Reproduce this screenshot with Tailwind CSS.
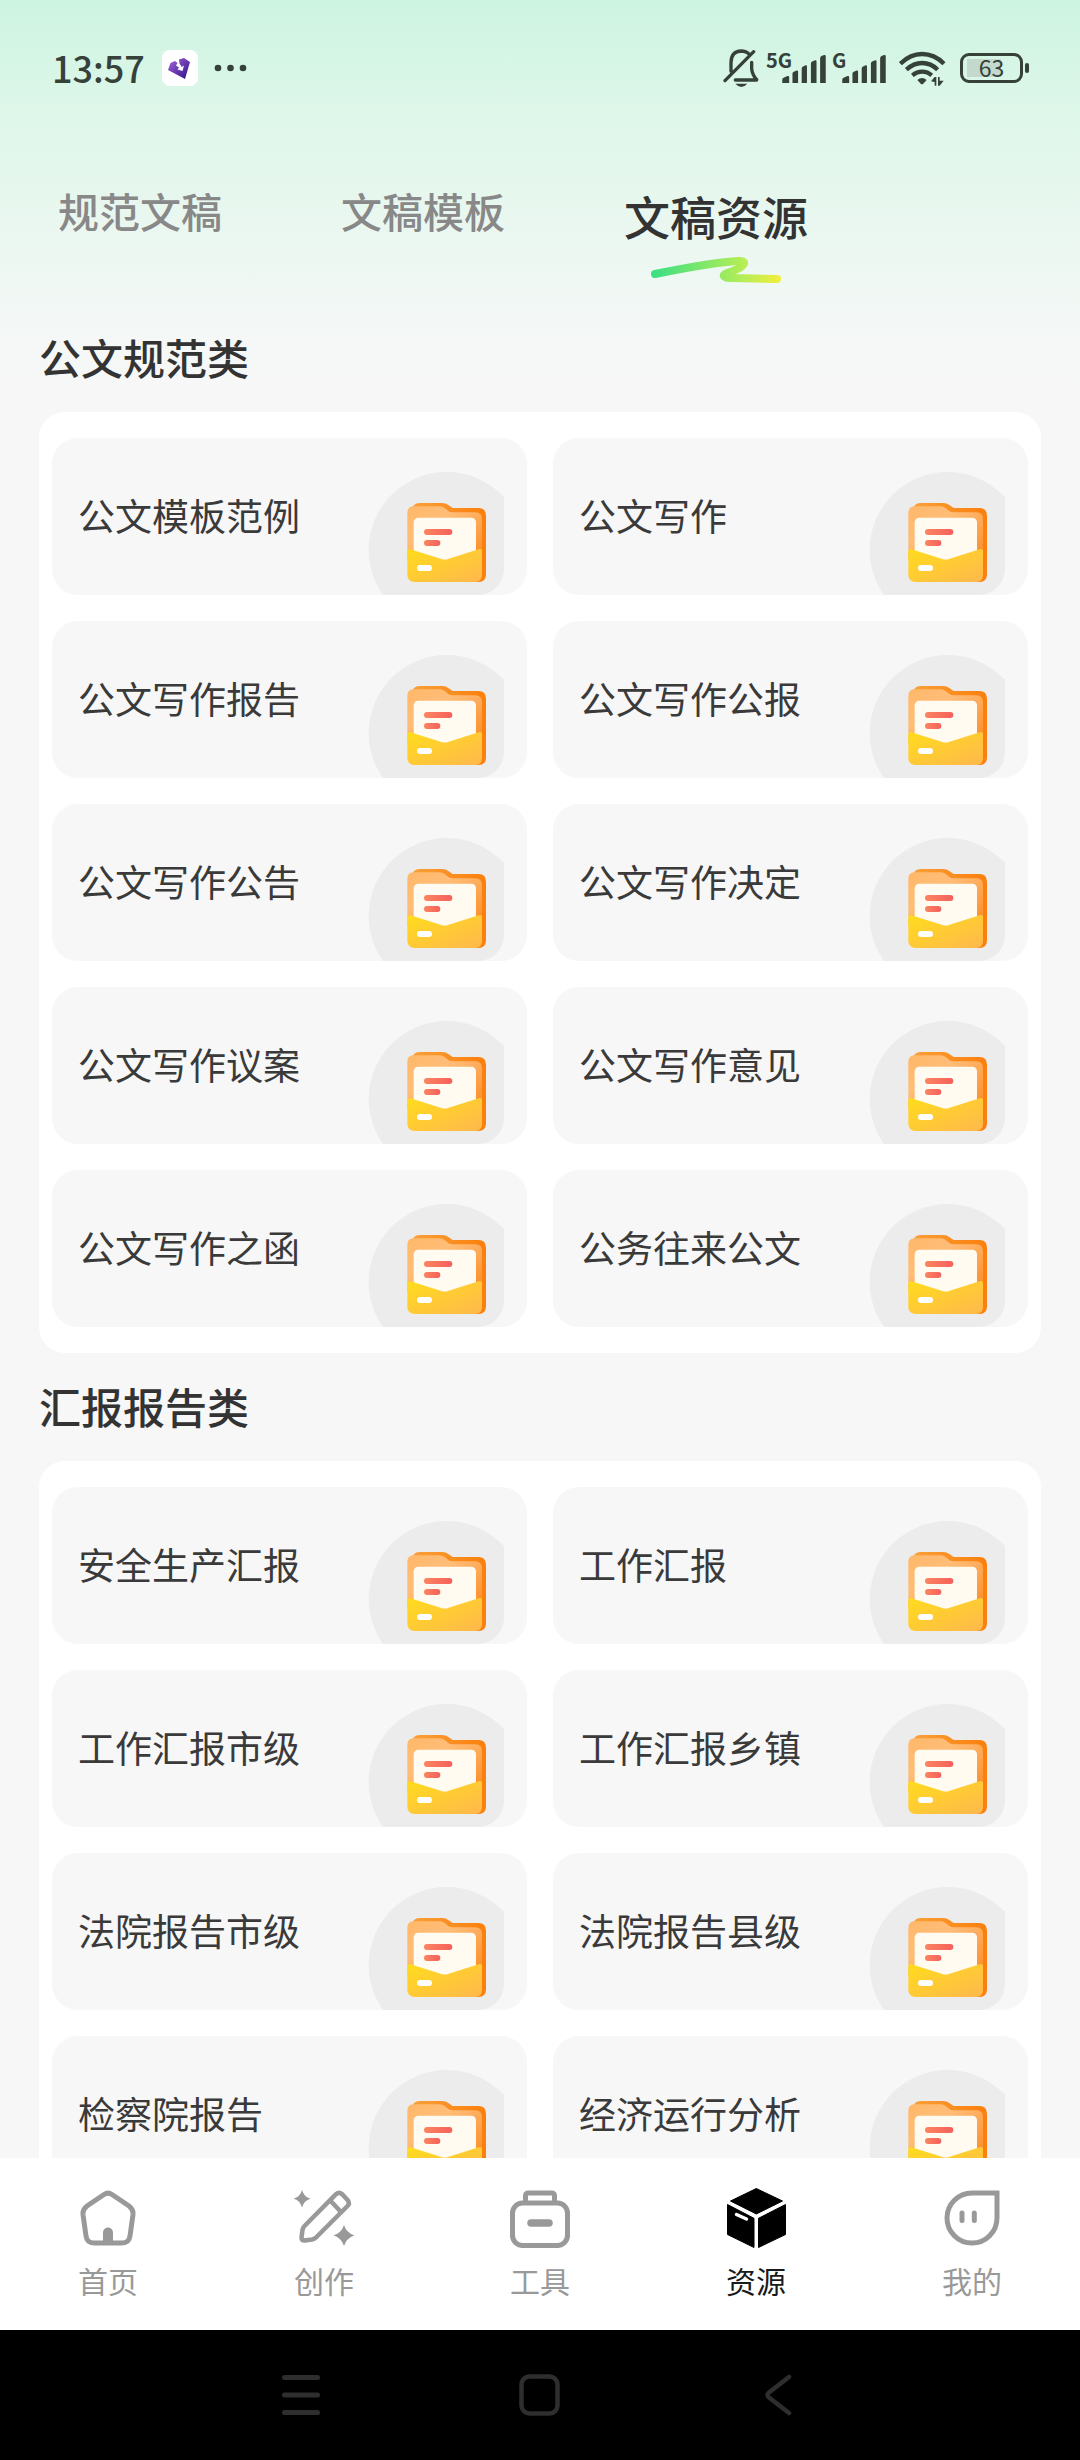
<!DOCTYPE html>
<html lang="zh-CN">
<head>
<meta charset="utf-8">
<meta name="viewport" content="width=device-width, initial-scale=1">
<title>文稿资源</title>
<script src="https://cdn.jsdelivr.net/npm/@tailwindcss/browser@4"></script>
</head>
<body class="bg-[#f7f7f7] font-['Noto_Sans_CJK_SC',sans-serif] text-[#333]">

<!-- Shared drawings -->
<svg class="absolute h-0 w-0" aria-hidden="true">
  <defs>
    <linearGradient id="back" x1="0" y1="0" x2="1" y2="0"><stop offset="0" stop-color="#f9a03a"/><stop offset="1" stop-color="#fb7f0c"/></linearGradient>
    <linearGradient id="front" x1="0" y1="0" x2="1" y2="1"><stop offset="0" stop-color="#ffb869"/><stop offset=".35" stop-color="#ffbd78"/><stop offset="1" stop-color="#fb8a22"/></linearGradient>
    <linearGradient id="pocket" x1="0" y1="0" x2="1" y2="1"><stop offset="0" stop-color="#ffdc1c"/><stop offset="1" stop-color="#ffb84e"/></linearGradient>
    <linearGradient id="line" x1="0" y1="0" x2="1" y2="0"><stop offset="0" stop-color="#fb8560"/><stop offset="1" stop-color="#f5605c"/></linearGradient>
  </defs>
  <symbol id="folder" viewBox="54 66 408 369">
    <circle cx="290" cy="300" r="234" fill="#ececec"/>
    <path fill="url(#back)" d="M208 159H276Q288 159 296 166L308 174H386Q408 175 408 197V374Q407 395 386 396H200L184 180Q190 159 208 159Z"/>
    <path fill="url(#front)" d="M190 169H268Q278 169 284 174L296 184Q300 187 308 187H376Q396 188 396 207V330H172V189Q172 170 190 169Z"/>
    <rect x="191" y="203" width="187" height="150" rx="14" fill="#fffbf1"/>
    <rect x="222" y="237" width="85" height="18" rx="9" fill="url(#line)"/>
    <rect x="222" y="270" width="49" height="18" rx="9" fill="url(#line)"/>
    <path fill="url(#pocket)" d="M172 303Q173 296 181 298L272 326Q284 331 296 326L386 298Q396 295 396 304V376Q395 396 376 396H194Q173 395 172 376Z"/>
    <rect x="201" y="345" width="45" height="18" rx="9" fill="#fff"/>
  </symbol>
  <symbol id="bars" viewBox="246 103 132 85">
    <path fill="#354139" d="M246 188V178Q246 174 250 172L262 167Q267 166 267 170V188ZM277 188V160Q277 156 281 154L290 150Q294 149 294 153V188ZM305 188V144Q305 140 309 138L317 134Q321 133 321 137V188ZM333 188V129Q333 125 337 123L346 119Q350 118 350 122V188ZM361 188V113Q361 108 365 106L373 103Q378 102 378 107V188Z"/>
  </symbol>
</svg>

<div class="flex h-screen flex-col bg-[linear-gradient(180deg,#cdf4e1_0px,#dff7ea_120px,#e8f7ef_210px,#f4f8f6_330px,#f7f7f7_400px)]">

  <!-- Status bar -->
  <div class="flex h-[136px] shrink-0 items-center pl-[52px] pr-[51px] text-[#354139]">
    <div class="pb-[2px] text-[36px] font-medium leading-[40px]">13:57</div>
    <svg class="ml-[17px] h-[36px] w-[36px]" viewBox="0 0 36 36"><defs><linearGradient id="app" x1="0" y1="0" x2="1" y2="1"><stop offset="0" stop-color="#a866dc"/><stop offset="1" stop-color="#2c0f86"/></linearGradient></defs><rect width="36" height="36" rx="8" fill="#fff"/><path fill="url(#app)" d="M6 20L8.500 13L13 11L15.500 13L14 15.500L17 17.500L15.500 19.500L20.500 21L22 15.500L19.800 17L17.500 13.500L17 9.500L22 8L28 12L23 29Z"/></svg>
    <svg class="ml-[16px] h-[8px] w-[34px]" viewBox="0 0 34 8" fill="#354139"><circle cx="4" cy="4" r="3.300"/><circle cx="16.500" cy="4" r="3.300"/><circle cx="29" cy="4" r="3.300"/></svg>
    <div class="ml-auto flex items-center">
      <svg class="h-[39px] w-[36px]" viewBox="70 88 108 117" fill="none" stroke="#354139" stroke-width="10" stroke-linecap="round"><path d="M94 155V128Q95 95 124 94Q140 94 149 104M76 183L162 96M156 128V148Q158 166 171 180M171 181H107" stroke-linejoin="round"/><path fill="#354139" stroke="none" d="M107 192H143Q125 212 107 192Z"/></svg>
      <div class="relative ml-[7px] flex h-[30px] w-[60px] items-end justify-end">
        <span class="absolute left-0 top-0 text-[20px] font-bold leading-[14px]">5G</span>
        <svg class="h-[28px] w-[44px]"><use href="#bars"/></svg>
      </div>
      <div class="relative ml-[6px] flex h-[30px] w-[54px] items-end justify-end">
        <span class="absolute left-0 top-0 text-[20px] font-bold leading-[14px]">G</span>
        <svg class="h-[28px] w-[44px]"><use href="#bars"/></svg>
      </div>
      <svg class="ml-[13px] h-[37px] w-[47px]" viewBox="596 90 141 111" fill="none" stroke="#354139" stroke-width="13"><path d="M600 131Q630 102 665 102Q702 102 731 131M618 149Q640 129 665 129Q692 129 712 149M636 166Q650 155 665 155Q682 155 694 166"/><path fill="#354139" stroke="none" d="M651 180Q665 168 679 180L668 192Q665 194 662 192ZM692 184L703 171H708V197H703V186ZM713 171H718V182H730L718 197H713Z"/></svg>
      <div class="ml-[14px] flex items-center gap-[2px]">
        <div class="flex h-[30px] w-[63px] items-center justify-center rounded-[9px] border-3 border-[#354139] bg-[linear-gradient(90deg,#c3d9cd,#c3d9cd)] bg-[length:34px_18px] bg-[position:4px_3px] bg-no-repeat pb-[2px] text-[23px] leading-[22px]">63</div>
        <div class="h-[10px] w-[4px] rounded-full bg-[#354139]"></div>
      </div>
    </div>
  </div>

  <!-- Tabs -->
  <div role="tablist" class="flex h-[168px] shrink-0 items-start gap-[119px] pl-[58px] pt-[46px] font-medium">
    <button role="tab" aria-selected="false" class="text-[41px] leading-[56px] text-[#888]">规范文稿</button>
    <button role="tab" aria-selected="false" class="text-[41px] leading-[56px] text-[#888]">文稿模板</button>
    <button role="tab" aria-selected="true" class="flex flex-col items-center text-[46px] leading-[66px]">文稿资源
      <svg class="mt-[8px] h-[28px] w-[132px]" viewBox="0 0 132 28"><defs><linearGradient id="swish" gradientUnits="userSpaceOnUse" x1="0" y1="0" x2="132" y2="0"><stop offset="0" stop-color="#37df85"/><stop offset=".75" stop-color="#bdee53"/><stop offset="1" stop-color="#f6ee3c"/></linearGradient></defs><path fill="none" stroke="url(#swish)" stroke-width="8" stroke-linecap="round" stroke-linejoin="round" d="M5 18C35 12 65 6 88 5C96 4.500 95 8 91 11C84 16 72 17 74 20C75 22 79 22 83 22L127 23"/></svg>
    </button>
  </div>

  <!-- Category list -->
  <main class="min-h-0 flex-1 overflow-y-auto px-[39px] [scrollbar-width:none]">
    <section>
      <h2 class="pb-[25px] pt-[23px] text-[42px] font-medium leading-[60px]">公文规范类</h2>
      <ul class="grid grid-cols-2 gap-[26px] rounded-[26px] bg-white px-[13px] py-[26px]" data-items="公文模板范例,公文写作,公文写作报告,公文写作公报,公文写作公告,公文写作决定,公文写作议案,公文写作意见,公文写作之函,公务往来公文"></ul>
    </section>
    <section>
      <h2 class="pb-[25px] pt-[23px] text-[42px] font-medium leading-[60px]">汇报报告类</h2>
      <ul class="grid grid-cols-2 gap-[26px] rounded-[26px] bg-white px-[13px] py-[26px]" data-items="安全生产汇报,工作汇报,工作汇报市级,工作汇报乡镇,法院报告市级,法院报告县级,检察院报告,经济运行分析"></ul>
    </section>
  </main>

  <!-- Bottom navigation -->
  <nav class="grid shrink-0 grid-cols-5 bg-white pb-[30px] pt-[30px] text-center text-[30px] leading-[40px] text-[#999]">
    <a href="#" class="flex flex-col items-center gap-[12px]">
      <svg class="h-[60px] w-[60px]" viewBox="0 0 60 60" fill="none" stroke="#999" stroke-width="5"><path d="M26 6.500Q30 3.800 34 6.500L51 18Q55.500 21.500 55 26.500L52 48Q51 55 44 55H16Q9 55 8 48L5 26.500Q4.500 21.500 9 18Z"/><path fill="#999" stroke="none" d="M25 55V44.500A5 5 0 0 1 35 44.500V55Z"/></svg>首页</a>
    <a href="#" class="flex flex-col items-center gap-[12px]">
      <svg class="h-[60px] w-[60px]" viewBox="0 0 60 60" fill="none" stroke="#999" stroke-width="4.500"><path stroke-linejoin="round" d="M42 6.200Q45 3.500 48 6L54 12.500Q56 15.500 53.500 18L22 49.500Q20.500 51 18 51.500L10.500 52.500Q7.500 52.500 7.500 49.500L8.500 42Q9 39.500 10.500 38ZM36 12.300L47 24"/><path fill="#999" stroke="none" d="M8 2Q10 9 16.500 10.700Q10 12.500 8 19.500Q6 12.500-.5 10.700Q6 9 8 2ZM50 37Q52.500 45 60.500 47.300Q52.500 50 50 58Q47.500 50 39.500 47.300Q47.500 45 50 37Z"/></svg>创作</a>
    <a href="#" class="flex flex-col items-center gap-[12px]">
      <svg class="h-[60px] w-[60px]" viewBox="0 0 60 60" fill="none" stroke="#999" stroke-width="5"><rect x="2.500" y="15" width="55" height="42.500" rx="10"/><path d="M15.500 15V8Q15.500 5 18.500 5H41.500Q44.500 5 44.500 8V15"/><path stroke-width="7.500" stroke-linecap="round" d="M21 35H39"/></svg>工具</a>
    <a href="#" aria-current="page" class="flex flex-col items-center gap-[12px] text-[#1a1a1a]">
      <svg class="h-[60px] w-[60px]" viewBox="1 0 60 60" fill="#000" stroke="#000" stroke-linejoin="round"><path d="M31.300 .5L57.500 13L31.300 26L5.500 13ZM2.500 16.500L29 30.300V59.500L2.500 46.500ZM33.500 30.300L60.500 16.500V46.500L33.500 59.500Z"/><path stroke="#fff" stroke-width="3.500" stroke-linecap="round" d="M11.500 26.500L21.500 31"/></svg>资源</a>
    <a href="#" class="flex flex-col items-center gap-[12px]">
      <svg class="h-[60px] w-[60px]" viewBox="0 0 60 60" fill="none" stroke="#999" stroke-width="5"><path d="M55 5H30A25 25 0 1 0 55 30Z"/><path stroke-linecap="round" d="M20 25V32.500M32.300 25V32.500"/></svg>我的</a>
  </nav>

  <!-- System buttons -->
  <div class="flex h-[130px] shrink-0 items-center justify-center gap-[179px] bg-black">
    <button aria-label="最近任务" class="flex w-[60px] justify-center"><svg class="h-[42px] w-[42px]" viewBox="0 0 42 42" stroke="#2e2e2e" stroke-width="5" stroke-linecap="round"><path d="M4.500 3.500H37.500M4.500 21H37.500M4.500 38.500H37.500"/></svg></button>
    <button aria-label="主屏幕" class="flex w-[60px] justify-center"><svg class="h-[42px] w-[42px]" viewBox="0 0 42 42" fill="none" stroke="#2e2e2e" stroke-width="4.500"><rect x="2.500" y="2.500" width="36" height="37" rx="8"/></svg></button>
    <button aria-label="返回" class="flex w-[60px] justify-center"><svg class="h-[42px] w-[42px]" viewBox="0 0 42 42" fill="none" stroke="#2e2e2e" stroke-width="4.500" stroke-linecap="round"><path d="M31 3L11 18.500Q8 21 11 23.500L31 39"/></svg></button>
  </div>
</div>

<template id="card">
  <li>
    <a href="#" class="flex h-[157px] items-center justify-between overflow-hidden rounded-[26px] bg-[#f7f7f7] pl-[26px] pr-[23px] text-[37px] leading-[52px] text-[#3a3a3a]">
      <span class="pb-[3px]"></span>
      <svg class="h-[123px] w-[136px] shrink-0 self-end rounded-br-[26px]" aria-hidden="true"><use href="#folder"/></svg>
    </a>
  </li>
</template>
<script>
  const card = document.getElementById('card');
  document.querySelectorAll('ul[data-items]').forEach(list => {
    list.dataset.items.split(',').forEach(name => {
      const item = card.content.cloneNode(true);
      item.querySelector('span').textContent = name;
      list.append(item);
    });
  });
</script>
</body>
</html>
